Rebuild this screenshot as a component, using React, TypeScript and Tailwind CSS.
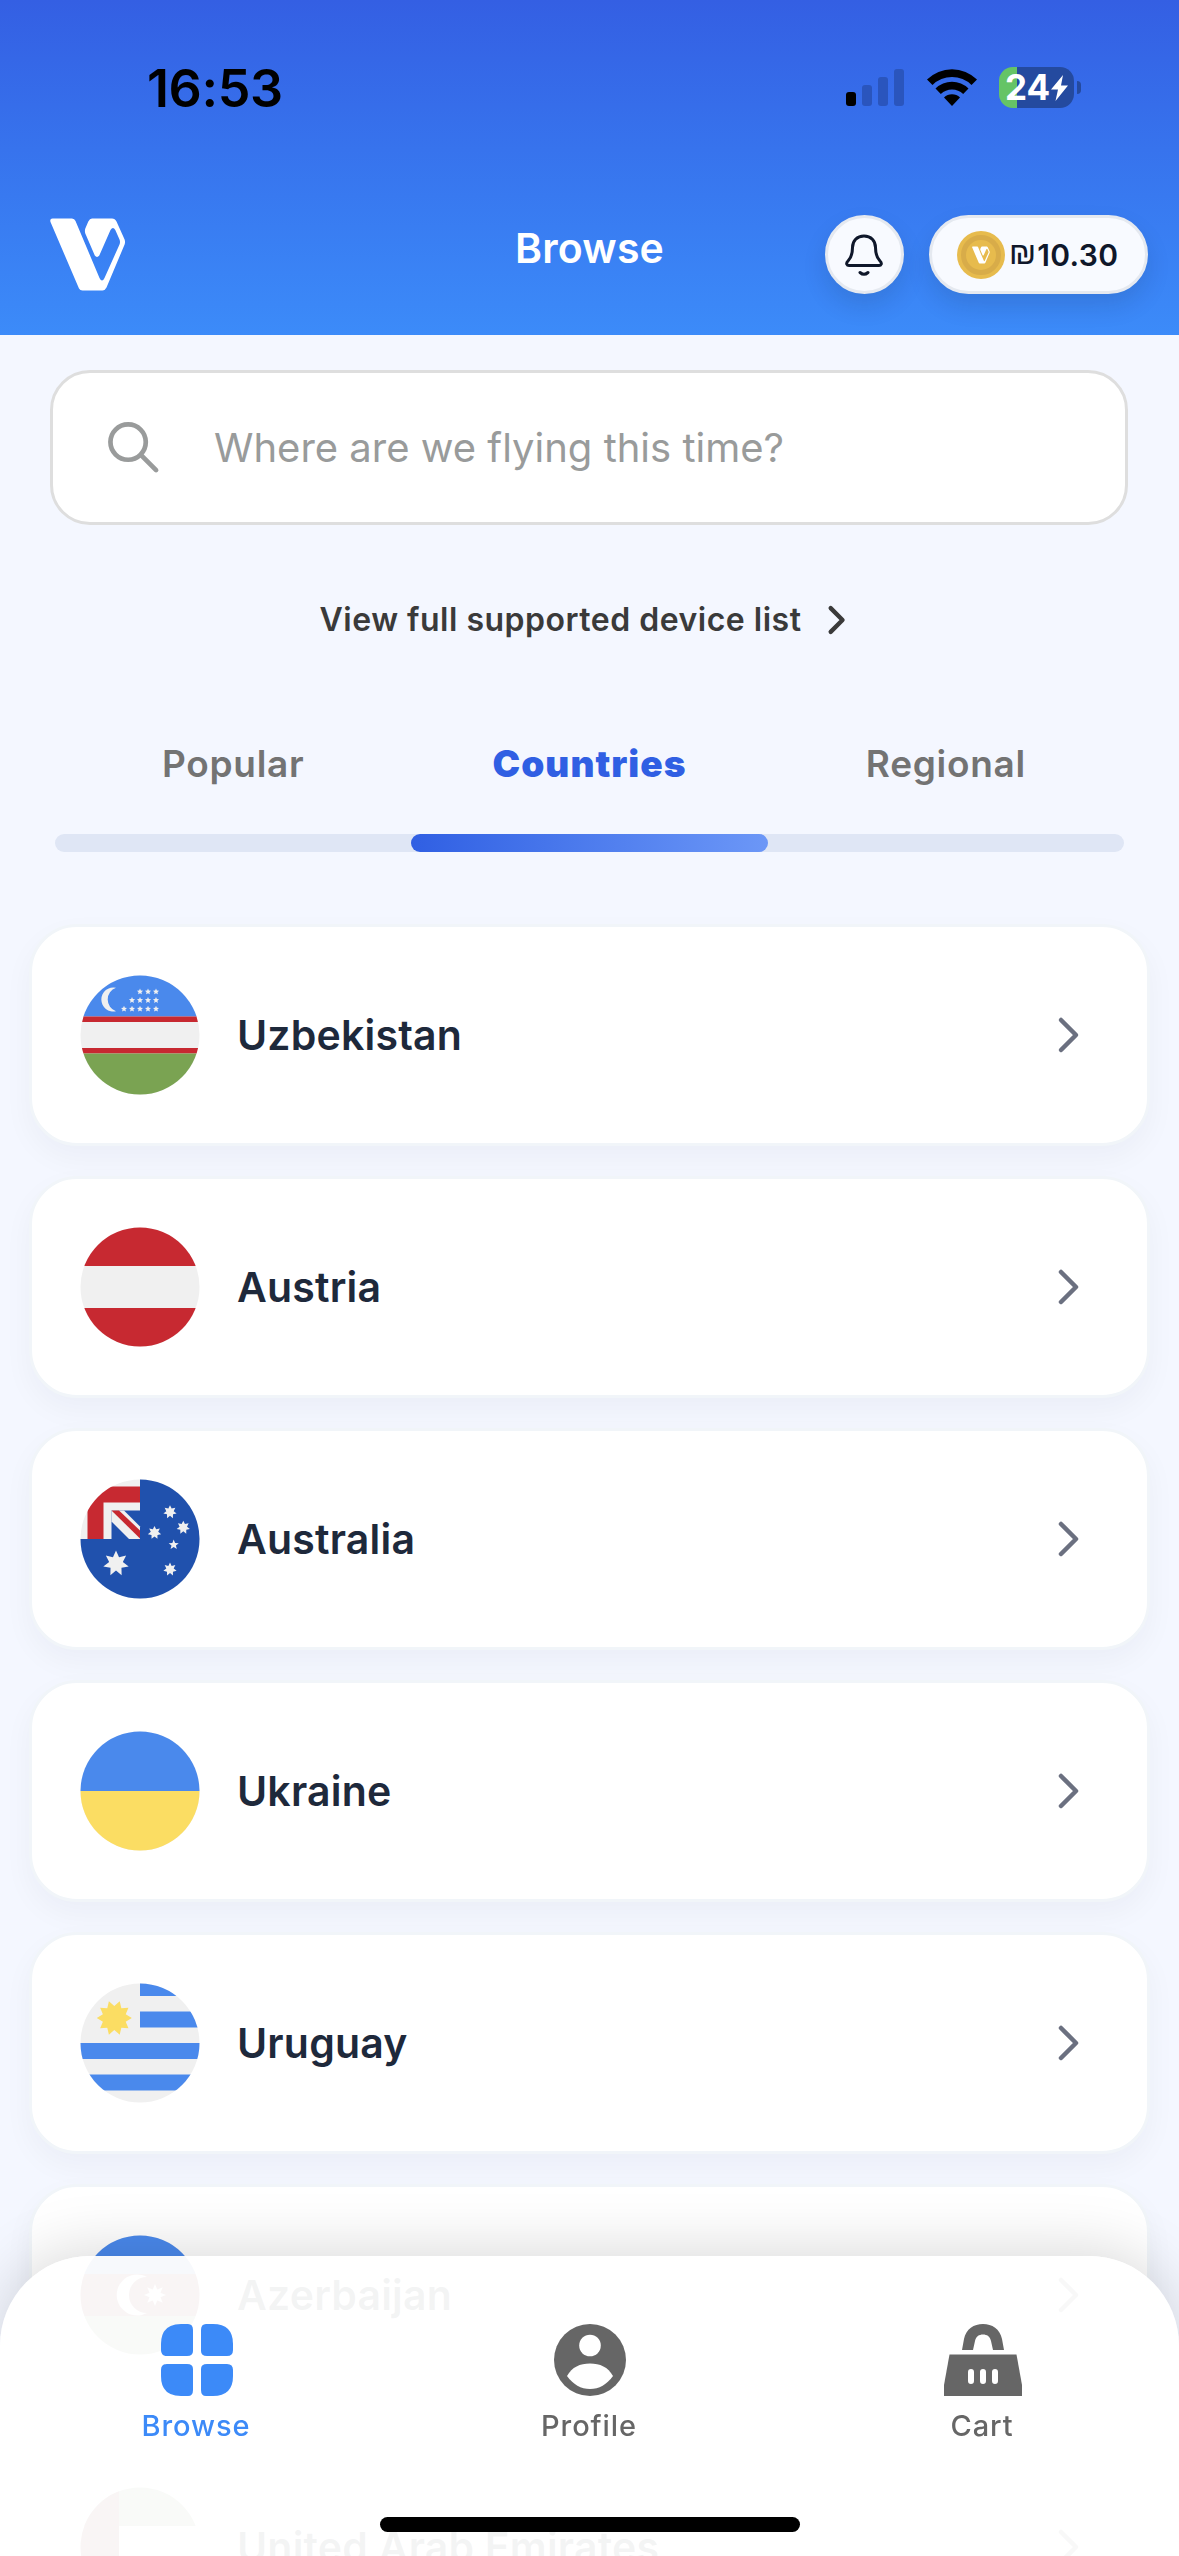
import type { ReactNode } from 'react'

const countries = [
    { name: 'Uzbekistan', flag: <Uzbekistan /> },
    { name: 'Austria', flag: <Austria /> },
    { name: 'Australia', flag: <Australia /> },
    { name: 'Ukraine', flag: <Ukraine /> },
    { name: 'Uruguay', flag: <Uruguay /> },
    { name: 'Azerbaijan', flag: <Azerbaijan /> },
    { name: 'United Arab Emirates', flag: <Emirates /> },
]

// points string for a star with n spikes
function star(cx: number, cy: number, n: number, outer: number, inner: number, turn = 0) {
    const pts: string[] = []
    for (let i = 0; i < n * 2; i++) {
        const r = i % 2 === 0 ? outer : inner
        const a = (Math.PI * i) / n - Math.PI / 2 + turn
        pts.push(`${(cx + r * Math.cos(a)).toFixed(2)},${(cy + r * Math.sin(a)).toFixed(2)}`)
    }
    return pts.join(' ')
}

function Flag({ id, children }: { id: string; children: ReactNode }) {
    return (
        <svg className="size-[120px] shrink-0" viewBox="0 0 120 120">
            <clipPath id={id}>
                <circle cx="60" cy="60" r="59.5" />
            </clipPath>
            <g clipPath={`url(#${id})`}>
                <rect width="120" height="120" fill="#f0f0f0" />
                {children}
            </g>
        </svg>
    )
}

function Uzbekistan() {
    const rows = [
        [60, 68, 76],
        [52, 60, 68, 76],
        [44, 52, 60, 68, 76],
    ]
    return (
        <Flag id="uz">
            <rect width="120" height="41.5" fill="#4a89ec" />
            <rect y="41.5" width="120" height="5.5" fill="#c72931" />
            <rect y="73" width="120" height="5.5" fill="#c72931" />
            <rect y="78.5" width="120" height="42" fill="#7aa352" />
            <path d="M36 12.800A12 12 0 1 0 36 36.200A12.400 12.400 0 0 1 36 12.800Z" fill="#f0f0f0" />
            {rows.map((row, y) => row.map((x) => (
                <polygon key={`${x}-${y}`} points={star(x, 16.7 + y * 8.6, 5, 3.2, 1.5)} fill="#f0f0f0" />
            )))}
        </Flag>
    )
}

function Austria() {
    return (
        <Flag id="at">
            <rect width="120" height="39" fill="#c72931" />
            <rect y="81" width="120" height="39" fill="#c72931" />
        </Flag>
    )
}

function Australia() {
    return (
        <Flag id="au">
            <path d="M60 0H120V120H0V60H60Z" fill="#2051ad" />
            <path d="M7.5 7.5H60V23.5H23.5V60H7.5Z" fill="#c72931" />
            <path d="M31.5 31.5H60V60H31.5Z" fill="#2051ad" />
            <path d="M31.5 31.5H44L60 47.5V60H49L31.5 42.5Z" fill="#f0f0f0" />
            <path d="M31.5 31.5H39L60 51.5V59.5Z" fill="#c72931" />
            <polygon points={star(36, 84.5, 7, 13, 7)} fill="#f0f0f0" />
            <polygon points={star(90, 33, 7, 6.8, 3.8)} fill="#f0f0f0" />
            <polygon points={star(74.5, 53.7, 7, 6.8, 3.8)} fill="#f0f0f0" />
            <polygon points={star(103.3, 48.5, 7, 6.8, 3.8)} fill="#f0f0f0" />
            <polygon points={star(93.7, 65.8, 5, 5.3, 2.3)} fill="#f0f0f0" />
            <polygon points={star(90, 90.3, 7, 6.8, 3.8)} fill="#f0f0f0" />
        </Flag>
    )
}

function Ukraine() {
    return (
        <Flag id="ua">
            <rect width="120" height="60" fill="#4a89ec" />
            <rect y="60" width="120" height="60" fill="#fbdd63" />
        </Flag>
    )
}

function Uruguay() {
    return (
        <Flag id="uy">
            <path d="M60 0H120V13H60ZM60 28.500H120V44.500H60ZM0 60H120V76H0ZM0 91.500H120V107.500H0Z" fill="#4a89ec" />
            <polygon points={star(34.3, 35, 10, 17.5, 12, Math.PI / 10)} fill="#fbdd63" />
        </Flag>
    )
}

function Azerbaijan() {
    return (
        <Flag id="az">
            <rect width="120" height="39" fill="#4a89ec" />
            <rect y="39" width="120" height="42" fill="#c72931" />
            <rect y="81" width="120" height="39" fill="#7aa352" />
            <path d="M67 42A20.500 20.500 0 1 0 67 78A16.800 16.800 0 1 1 67 42Z" fill="#f0f0f0" />
            <polygon points={star(75, 60, 8, 11, 6)} fill="#f0f0f0" />
        </Flag>
    )
}

function Emirates() {
    return (
        <Flag id="ae">
            <rect width="120" height="39" fill="#7aa352" />
            <rect y="81" width="120" height="39" fill="#000" />
            <rect width="39" height="120" fill="#c72931" />
        </Flag>
    )
}

function Logo({ className }: { className: string }) {
    return (
        <svg className={className} viewBox="0 0 76 72" fill="currentColor">
            <path d="M2.500 0H22Q24.500 0 25.500 2.500L49.500 59.500Q52 64.500 54.500 59.500L69.500 26Q70.500 23.500 69.500 21L65.300 11.500Q63 7.500 60.500 11.500L49.300 37Q47 39.800 44.800 37L35.300 15Q34.500 12.500 35.300 10L38.300 3Q39.800 0 42 0H62Q65 0 66.500 3L74.600 21Q75.500 23.300 74.600 26L56.500 69Q55 72 52.500 72H32.500Q30 72 29 70L.5 3.500Q-.5 0 2.500 0Z" />
        </svg>
    )
}

function Chevron({ className }: { className: string }) {
    return (
        <svg className={className} viewBox="0 0 24 38" fill="none" stroke="currentColor" strokeLinecap="round" strokeLinejoin="round">
            <path d="M4 4L19 19L4 34" />
        </svg>
    )
}

function StatusBar() {
    return (
        <div className="flex items-start justify-between h-[200px] pl-[147px] pr-[98px]">
            <div className="mt-[58px] text-[52px] leading-[62px] font-semibold tracking-[-0.4px] text-black">16:53</div>
            <div className="mt-[66px] flex">
                <svg className="w-[60px] h-[42px]" viewBox="0 0 60 42">
                    <rect x="0" y="26" width="10" height="14" rx="3" fill="#000" />
                    <rect x="16" y="19" width="10" height="21" rx="3" fill="#2a55bd" />
                    <rect x="32" y="11" width="10" height="29" rx="3" fill="#2a55bd" />
                    <rect x="48" y="3" width="10" height="37" rx="3" fill="#2a55bd" />
                </svg>
                <svg className="ml-5 w-[52px] h-[42px]" viewBox="0 0 52 42">
                    <path d="M1 13.500A35.500 35.500 0 0 1 51 13.500L45.500 19A27.700 27.700 0 0 0 6.500 19Z" />
                    <path d="M9.500 22.500A23.500 23.500 0 0 1 42.500 22.500L37.200 28A16 16 0 0 0 14.800 28Z" />
                    <path d="M18 31.500A11.500 11.500 0 0 1 34 31.500L26 40Z" />
                </svg>
                <div className="ml-[21px] mt-px flex items-center">
                    <div className="flex h-[41px] w-[75px] items-center justify-center rounded-[14px] bg-[linear-gradient(90deg,#65c466_18px,#244a9f_18px)] text-[35px] font-bold text-white">
                        <span>24</span>
                        <svg className="ml-px w-[17px] h-[26px]" viewBox="0 0 17 26" fill="#fff">
                            <path d="M12 0L0 14.500H7L4.500 26L17 10.500H10Z" />
                        </svg>
                    </div>
                    <div className="ml-[3px] h-[13px] w-1 rounded-r-full bg-[#244a9f]" />
                </div>
            </div>
        </div>
    )
}

function Header() {
    return (
        <header className="h-[335px] bg-linear-to-b from-[#345fe3] to-[#3c8bf9]">
            <StatusBar />
            <div className="grid grid-cols-[1fr_auto_1fr] items-start pl-[50px] pr-[50px]">
                <Logo className="mt-[18px] w-[76px] h-[73px] text-white" />
                <h1 className="mt-[22px] text-[41px] leading-[52px] font-semibold tracking-[0.2px] text-white">Browse</h1>
                <div className="mt-[15px] -mr-[19px] flex justify-end gap-[25px]">
                    <div className="flex size-[79px] items-center justify-center rounded-full border-[3px] border-[#e5e9f0] bg-[#f8faff] shadow-[0_12px_24px_rgba(15,23,42,0.12)]">
                        <svg className="mr-px w-[38px] h-[42px]" viewBox="0 0 38 42" fill="none" stroke="#0f172a" strokeWidth="3" strokeLinecap="round" strokeLinejoin="round">
                            <path d="M19 2C12 2 7.500 7 7.500 13.500C7.500 21 6 24 3 27C.5 29.500 2 31.500 4 31.500H34C36 31.500 37.500 29.500 35 27C32 24 30.500 21 30.500 13.500C30.500 7 26 2 19 2Z" />
                            <path d="M15 38.500Q19 42 23 38.500" />
                        </svg>
                    </div>
                    <div className="flex h-[79px] w-[219px] items-center rounded-full border-[3px] border-[#e5e9f0] bg-[#f8faff] pl-[25px] shadow-[0_12px_24px_rgba(15,23,42,0.12)]">
                        <div className="flex size-12 shrink-0 items-center justify-center rounded-full bg-[#e7bb4d]">
                            <div className="flex size-10 items-center justify-center rounded-full border-[5px] border-[#d8ac49]">
                                <Logo className="w-[18px] h-[18px] text-white" />
                            </div>
                        </div>
                        <div className="ml-1 flex items-center text-[30px] leading-9 font-semibold whitespace-nowrap text-[#0f172a]">
                            <span className="mb-1 font-['Liberation_Sans',sans-serif] text-[32px] font-normal">₪</span>
                            <span className="ml-px tracking-[0.4px]">10.30</span>
                        </div>
                    </div>
                </div>
            </div>
        </header>
    )
}

function Tabs() {
    return (
        <div className="mt-[97px] mx-[55px]">
            <div className="grid grid-cols-3 text-center text-[37px] leading-[48px] font-semibold tracking-[0.7px] text-[#737373]">
                <span>Popular</span>
                <span className="font-black tracking-[1px] text-[#305fe3]">Countries</span>
                <span>Regional</span>
            </div>
            <div className="mt-[46px] flex h-[18px] justify-center rounded-full bg-[#dfe6f5]">
                <div className="h-full w-[357px] rounded-full bg-linear-to-r from-[#305fe3] to-[#6c97f7]" />
            </div>
        </div>
    )
}

function BottomNav() {
    return (
        <nav className="absolute inset-x-0 bottom-0 h-[300px] rounded-t-[90px] bg-white/95 shadow-[0_-6px_60px_rgba(0,0,0,0.15)] backdrop-saturate-50">
            <div className="grid grid-cols-3 pt-[68px] text-[29px] leading-9 font-medium tracking-[0.9px] text-[#666]">
                <div className="flex flex-col items-center gap-3 text-[#3c8af8]">
                    <svg className="w-[72px] h-[72px]" viewBox="0 0 72 72" fill="currentColor">
                        <path d="M20 0H27Q32 0 32 6V27Q32 32 26 32H6Q0 32 0 26V20Q0 0 20 0Z" />
                        <path d="M52 0H45Q40 0 40 6V27Q40 32 46 32H66Q72 32 72 26V20Q72 0 52 0Z" />
                        <path d="M20 72H27Q32 72 32 66V45Q32 40 26 40H6Q0 40 0 46V52Q0 72 20 72Z" />
                        <path d="M52 72H45Q40 72 40 66V45Q40 40 46 40H66Q72 40 72 46V52Q72 72 52 72Z" />
                    </svg>
                    <span className="mr-px">Browse</span>
                </div>
                <div className="flex flex-col items-center gap-3">
                    <svg className="w-[72px] h-[72px]" viewBox="0 0 72 72">
                        <circle cx="36" cy="36" r="36" fill="currentColor" />
                        <circle cx="36" cy="21.500" r="10.800" fill="#fff" />
                        <path d="M13 52C18 43 26 39.500 36 39.500S54 43 59 52C53 60.500 45 65 36 65S19 60.500 13 52Z" fill="#fff" />
                    </svg>
                    <span className="mr-px">Profile</span>
                </div>
                <div className="flex flex-col items-center gap-3">
                    <svg className="w-[78px] h-[72px]" viewBox="0 0 78 72" fill="currentColor">
                        <path d="M18 26L20 15C22 5 30 0 39 0S56 5 58 15L60 26H49L47 17C46 12.500 43 10.500 39 10.500S32 12.500 31 17L29 26Z" />
                        <path d="M5.500 30.500H72.500L78 61V72H0V61Z" />
                        <path d="M27 48V57M39 48V57M51 48V57" stroke="#fff" strokeWidth="6" strokeLinecap="round" />
                    </svg>
                    <span className="mr-px">Cart</span>
                </div>
            </div>
            <div className="absolute bottom-[24px] left-1/2 h-[15px] w-[420px] -translate-x-1/2 rounded-full bg-black" />
        </nav>
    )
}

export default function App() {
    return (
        <div className="relative h-[2556px] w-[1179px] overflow-hidden bg-[#f4f7ff] font-[Inter,'Liberation_Sans',sans-serif]">
            <Header />
            <div className="ml-[50px] mr-[51px] mt-[35px] flex h-[155px] items-center rounded-[40px] border-[3px] border-[#dedede] bg-white pl-[54px]">
                <svg className="w-[53px] h-[53px]" viewBox="0 0 54 54" fill="none" stroke="#999b9b" strokeWidth="4.800" strokeLinecap="round">
                    <circle cx="21.500" cy="21.500" r="18" />
                    <path d="M34.500 34.500L50 50" />
                </svg>
                <span className="ml-[54px] text-[40px] text-[#999b9b]">Where are we flying this time?</span>
            </div>
            <div className="mt-[72px] flex items-center justify-center gap-[26px] pr-[12px] text-[#3a3a3a]">
                <span className="text-[32px] leading-[46px] font-semibold tracking-[0.5px]">View full supported device list</span>
                <Chevron className="w-[20px] h-[30px] stroke-[5.5]" />
            </div>
            <Tabs />
            <ul className="mt-[72px] flex flex-col gap-[30px] px-[29px]">
                {countries.map((c) => (
                    <li key={c.name} className="flex h-[222px] shrink-0 items-center rounded-[48px] border-[3px] border-[#f1f5f9] bg-white pl-[48px] pr-[66px] shadow-[0_12px_30px_rgba(15,23,42,0.04)]">
                        {c.flag}
                        <span className="ml-[37px] mt-0.5 text-[41px] font-semibold tracking-[0.2px] text-[#1e293b]">{c.name}</span>
                        <Chevron className="ml-auto w-[24px] h-[38px] stroke-[4.5] text-[#6b7080]" />
                    </li>
                ))}
            </ul>
            <BottomNav />
        </div>
    )
}
